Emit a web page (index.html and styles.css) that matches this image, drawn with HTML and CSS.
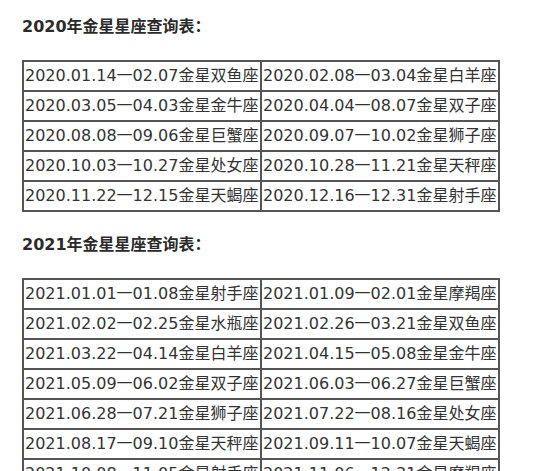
FILE: index.html
```html
<!DOCTYPE html>
<html lang="zh-CN">
<head>
<meta charset="utf-8">
<link rel="stylesheet" href="styles.css">
</head>
<body>
<div class="article">
  <p class="title">2020年金星星座查询表：</p>
  <table class="venus">
    <tr><td>2020.01.14一02.07金星双鱼座</td><td>2020.02.08一03.04金星白羊座</td></tr>
    <tr><td>2020.03.05一04.03金星金牛座</td><td>2020.04.04一08.07金星双子座</td></tr>
    <tr><td>2020.08.08一09.06金星巨蟹座</td><td>2020.09.07一10.02金星狮子座</td></tr>
    <tr><td>2020.10.03一10.27金星处女座</td><td>2020.10.28一11.21金星天秤座</td></tr>
    <tr><td>2020.11.22一12.15金星天蝎座</td><td>2020.12.16一12.31金星射手座</td></tr>
  </table>
  <p class="title">2021年金星星座查询表：</p>
  <table class="venus">
    <tr><td>2021.01.01一01.08金星射手座</td><td>2021.01.09一02.01金星摩羯座</td></tr>
    <tr><td>2021.02.02一02.25金星水瓶座</td><td>2021.02.26一03.21金星双鱼座</td></tr>
    <tr><td>2021.03.22一04.14金星白羊座</td><td>2021.04.15一05.08金星金牛座</td></tr>
    <tr><td>2021.05.09一06.02金星双子座</td><td>2021.06.03一06.27金星巨蟹座</td></tr>
    <tr><td>2021.06.28一07.21金星狮子座</td><td>2021.07.22一08.16金星处女座</td></tr>
    <tr><td>2021.08.17一09.10金星天秤座</td><td>2021.09.11一10.07金星天蝎座</td></tr>
    <tr><td>2021.10.08一11.05金星射手座</td><td>2021.11.06一12.31金星摩羯座</td></tr>
  </table>
</div>
</body>
</html>
```
FILE: styles.css
```css
html, body {
  margin: 0;
  padding: 0;
  background: #fff;
}
.article {
  padding: 14px 0 0 22px;
  font-family: "DejaVu Sans", "Noto Sans CJK SC", sans-serif;
  color: #333;
  font-size: 16px;
}
.title {
  margin: 0;
  font-weight: bold;
  line-height: 26px;
  color: #2b2b2b;
}
.venus {
  border-collapse: collapse;
  width: 478px;
  margin: 20px 0 20px 0;
  table-layout: fixed;
}
.venus td {
  border: 2px solid #555;
  width: 50%;
  height: 28px;
  padding: 0 0 0 1px;
  line-height: 28px;
  white-space: nowrap;
  overflow: hidden;
}
```
